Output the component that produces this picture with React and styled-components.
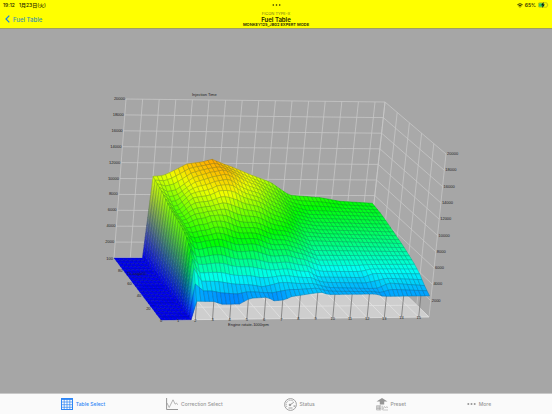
import React from 'react';
import styled, { createGlobalStyle } from 'styled-components';

const GlobalStyle = createGlobalStyle`
  body {
    margin: 0;
    background-color: #a6a6a6;
    font-family: Inter, 'Noto Sans CJK JP', sans-serif;
  }
`;

const Page = styled.div`
  display: flex;
  flex-direction: column;
  min-height: 100vh;
`;

const Header = styled.header`
  background-color: #ffff00;
  border-bottom: 1px solid #a0a060;
  color: #222200;
`;

const StatusBar = styled.div`
  display: grid;
  grid-template-columns: 1fr auto 1fr;
  align-items: center;
  height: 10px;
  padding: 0 3px;
  font-size: 5px;
  font-weight: 500;
  line-height: 10px;
`;

const Clock = styled.div`
  display: flex;
  gap: 4px;
`;

const Battery = styled.div`
  display: flex;
  justify-content: flex-end;
  align-items: center;
  gap: 2px;
`;

const NavBar = styled.div`
  display: grid;
  grid-template-columns: 1fr auto 1fr;
  align-items: center;
  height: 18px;
  padding: 0 5px;
`;

const BackLink = styled.a`
  display: flex;
  align-items: center;
  gap: 3px;
  color: #3b8fb0;
  font-size: 6px;
  font-weight: 500;
  text-decoration: none;
`;

const Titles = styled.div`
  text-align: center;
`;

const Brand = styled.div`
  color: #77771a;
  font-size: 4px;
  line-height: 4px;
`;

const Title = styled.h1`
  margin: 0;
  font-size: 6px;
  font-weight: 600;
  line-height: 7px;
`;

const Mode = styled.div`
  font-size: 4px;
  font-weight: 600;
  line-height: 4px;
`;

const Main = styled.main`
  display: flex;
  flex: 1;
`;

const Chart = styled.svg`
  display: block;
  width: 100%;
  font-family: 'Liberation Sans', sans-serif;
  font-size: 4px;
`;

const TabBar = styled.nav`
  display: flex;
  justify-content: space-evenly;
  height: 20px;
  background-color: #fafafa;
  border-top: 1px solid #c8c8c8;
`;

const Tab = styled.button`
  display: flex;
  align-items: center;
  gap: 3px;
  padding: 0;
  border: 0;
  background: none;
  color: ${props => (props.$active ? '#2f86f6' : '#969696')};
  font-family: inherit;
  font-size: 5px;
  font-weight: 500;
  cursor: pointer;
`;

const MAX_SPEED = 15.6;
const MAX_TIME = 20000;
const ROWS = 22;
const STEP = 0.25;

// injection time along the engine speed axis, from the back row to the front
const PROFILES = [
  [0, [[2, 10300], [2.6, 10400], [3.1, 10900], [4, 11900], [4.9, 12150], [5.5, 12500], [6.1, 12000], [6.8, 11500], [8, 10500], [9.2, 9600], [10, 8500], [10.4, 8000], [12.3, 7700], [13.5, 7250], [15.6, 7000]]],
  [0.15, [[2, 9800], [2.5, 9300], [3, 9600], [4, 11000], [5, 11900], [5.8, 12100], [7, 11000], [8, 10000], [9, 8900], [10, 7600], [11, 7000], [15.6, 6700]]],
  [0.3, [[2, 9400], [2.6, 8400], [3.5, 9900], [5, 11000], [6, 10900], [7, 9900], [8, 9000], [9, 8000], [10, 6900], [11, 6500], [15.6, 6200]]],
  [0.5, [[2, 9000], [2.6, 7800], [3.2, 8600], [4, 9200], [5, 8900], [6, 8400], [7, 7900], [8, 7400], [9, 6800], [10, 5900], [15.6, 5500]]],
  [0.7, [[2, 8200], [2.6, 6900], [3.2, 7300], [4, 7200], [5, 6800], [6, 6600], [7, 6200], [8, 5900], [9, 5500], [10, 4700], [15.6, 4700]]],
  [0.82, [[2, 7200], [2.4, 5500], [4, 5400], [6, 4800], [8, 4600], [9, 4400], [9.6, 3700], [12.2, 3600], [12.8, 4100], [15.6, 4000]]],
  [0.92, [[2, 5400], [2.5, 3900], [4, 3600], [6, 3100], [7, 3600], [9, 3500], [10, 3000], [12.8, 2800], [13.4, 3500], [15.6, 3100]]],
  [1, [[2, 2250], [3.1, 2200], [3.4, 1850], [4.5, 1850], [5.1, 2550], [6.1, 2650], [6.5, 2200], [7.1, 2300], [7.5, 2700], [9.2, 3200], [9.6, 2900], [12.4, 2900], [12.8, 2600], [15.6, 2600]]],
];

const COLORS = [
  [0, [0, 0, 240]],
  [1800, [0, 110, 255]],
  [2800, [0, 165, 255]],
  [4200, [0, 255, 245]],
  [5600, [0, 255, 130]],
  [7200, [0, 255, 0]],
  [9000, [120, 255, 0]],
  [10600, [240, 255, 0]],
  [12500, [255, 165, 0]],
];

const mix = (a, b, k) => a + (b - a) * k;

const segment = (stops, at) => {
  if (at <= stops[0][0]) return [stops[0][1], stops[0][1], 0];
  for (let i = 1; i < stops.length; i += 1) {
    if (at <= stops[i][0]) {
      return [stops[i - 1][1], stops[i][1], (at - stops[i - 1][0]) / (stops[i][0] - stops[i - 1][0])];
    }
  }
  const last = stops[stops.length - 1][1];
  return [last, last, 0];
};

const lookup = (stops, at) => mix(...segment(stops, at));

// small waves in the middle of the map, none at the edges
const ripple = (speed, depth) => {
  if (speed > 9) return 0;
  const fade = 4 * depth * (1 - depth) * Math.min(1, 9 - speed);
  return 170 * fade * Math.sin(speed * 3.1 + depth * 11);
};

const timeAt = (speed, depth) => {
  if (speed < 1.9) return 0;
  const [from, to, k] = segment(PROFILES, depth);
  return mix(lookup(from, speed), lookup(to, speed), k) + ripple(speed, depth);
};

const colorAt = time => {
  const [from, to, k] = segment(COLORS, time);
  return from.map((channel, i) => mix(channel, to[i], k));
};

const rgb = color => `rgb(${color.map(Math.round).join(',')})`;

const project = (speed, depth, time) => {
  const u = speed / MAX_SPEED;
  const h = time / MAX_TIME;
  const x = mix(mix(114, 368, u), mix(161, 429, u), depth);
  const y = mix(258, mix(320, 317, u), depth);
  return [x + h * mix(mix(12, 17, u), mix(10, 17, u), depth), y - h * mix(mix(159, 156, u), 163, depth)];
};

const pointList = list => list.map(([x, y]) => `${x.toFixed(1)},${y.toFixed(1)}`).join(' ');

const between = (a, b, k) => [mix(a[0], b[0], k), mix(a[1], b[1], k)];

const buildCells = () => {
  const cells = [];
  for (let r = 0; r < ROWS; r += 1) {
    const d0 = r / ROWS;
    const d1 = (r + 1) / ROWS;
    for (let s = 0; s < MAX_SPEED - 0.1; s += STEP) {
      const e = Math.min(s + STEP, MAX_SPEED);
      const times = [timeAt(s, d0), timeAt(e, d0), timeAt(e, d1), timeAt(s, d1)];
      const corners = [
        project(s, d0, times[0]),
        project(e, d0, times[1]),
        project(e, d1, times[2]),
        project(s, d1, times[3]),
      ];
      const slices = s === 1.75 ? 20 : 1;
      const left = colorAt((times[0] + times[3]) / 2);
      const right = colorAt((times[1] + times[2]) / 2);
      const fills = Array.from({ length: slices }, (_, i) => ({
        color: rgb(left.map((c, n) => mix(c, right[n], (i + 0.5) / slices))),
        points: pointList([
          between(corners[0], corners[1], i / slices),
          between(corners[0], corners[1], (i + 1) / slices),
          between(corners[3], corners[2], (i + 1) / slices),
          between(corners[3], corners[2], i / slices),
        ]),
      }));
      cells.push({ id: `${r}-${s}`, fills, outline: pointList(corners) });
    }
  }
  return cells;
};

const cells = buildCells();
const speeds = Array.from({ length: 16 }, (_, i) => i);
const times = Array.from({ length: 11 }, (_, i) => i * 2000);
const depths = [0, 0.2, 0.4, 0.6, 0.8, 1];

const GridLine = ({ from, to, stroke = '#c6c6c6' }) => (
  <line x1={from[0]} y1={from[1]} x2={to[0]} y2={to[1]} stroke={stroke} strokeWidth="0.8" />
);

const Grid = () => (
  <g>
    <polygon
      fill="#cecece"
      points={pointList([project(0, 0, 0), project(MAX_SPEED, 0, 0), project(MAX_SPEED, 1, 0), project(0, 1, 0)])}
    />
    <polygon
      fill="#a9a9a9"
      points={pointList([
        project(MAX_SPEED, 0, 0),
        project(MAX_SPEED, 0, MAX_TIME),
        project(MAX_SPEED, 1, MAX_TIME),
        project(MAX_SPEED, 1, 0),
      ])}
    />
    {times.map(t => (
      <g key={t}>
        <GridLine from={project(0, 0, t)} to={project(MAX_SPEED, 0, t)} />
        <GridLine from={project(MAX_SPEED, 0, t)} to={project(MAX_SPEED, 1, t)} />
      </g>
    ))}
    {[...speeds, MAX_SPEED].map(s => (
      <g key={s}>
        <GridLine from={project(s, 0, 0)} to={project(s, 0, MAX_TIME)} />
        <GridLine from={project(s, 0, 0)} to={project(s, 1, 0)} stroke="#e2e2e2" />
      </g>
    ))}
    {depths.map(d => (
      <g key={d}>
        <GridLine from={project(MAX_SPEED, d, 0)} to={project(MAX_SPEED, d, MAX_TIME)} />
        <GridLine from={project(0, d, 0)} to={project(MAX_SPEED, d, 0)} stroke="#e2e2e2" />
      </g>
    ))}
    {speeds.map(s => (
      <GridLine key={s} from={project(s, 1, 0)} to={project(s, 1, timeAt(s, 1))} stroke="#777" />
    ))}
  </g>
);

const Surface = () => (
  <g>
    {cells.map(({ id, fills, outline }) => (
      <g key={id}>
        {fills.map(({ color, points }) => (
          <polygon key={points} points={points} fill={color} stroke={color} strokeWidth="0.4" />
        ))}
        <polygon points={outline} fill="none" stroke="#002030" strokeOpacity="0.5" strokeWidth="0.35" />
      </g>
    ))}
  </g>
);

const Labels = () => (
  <g fill="#222">
    <text x="192" y="96">Injection Time</text>
    <text x="228" y="326">Engine rotate-1000rpm</text>
    <text x="127" y="275">Th angle%</text>
    {times.slice(1).map(t => {
      const [x, y] = project(0, 0, t);
      const [rx, ry] = project(MAX_SPEED, 1, t);
      return (
        <g key={t}>
          <text x={x - 1} y={y + 1} textAnchor="end">{t}</text>
          <text x={rx + 1} y={ry + 1}>{t}</text>
        </g>
      );
    })}
    {speeds.map(s => {
      const [x, y] = project(s, 1, 0);
      return <text key={s} x={x} y={y + 2} textAnchor="middle">{s}</text>;
    })}
    {depths.slice(0, 5).map(d => {
      const [x, y] = project(0, d, 0);
      return <text key={d} x={x - 1} y={y + 2} textAnchor="end">{Math.round(100 - d * 100)}</text>;
    })}
  </g>
);

const TableIcon = () => (
  <svg width="12" height="12" viewBox="0 0 12 12" fill="none" stroke="currentColor">
    <rect x="0.5" y="0.5" width="11" height="11" />
    <path d="M0 1.2h12" strokeWidth="1.4" />
    <path d="M3.2 0v12M6 0v12M8.8 0v12M0 4h12M0 6.7h12M0 9.3h12" strokeWidth="0.7" />
  </svg>
);

const CurveIcon = () => (
  <svg width="12" height="12" viewBox="0 0 12 12" fill="none" stroke="currentColor">
    <path d="M0.6 0v11.5H12" />
    <path d="M1 5l2.2 4.5L7 1.8l2.2 4.4L10.4 5l1.4 1.8" strokeWidth="0.7" />
  </svg>
);

const GaugeIcon = () => (
  <svg width="13" height="13" viewBox="0 0 13 13" fill="none" stroke="currentColor">
    <circle cx="6.5" cy="6.5" r="5.9" strokeWidth="0.9" />
    <path d="M2.8 8.8A4.3 4.3 0 0 1 9.6 3.6" strokeWidth="1" strokeDasharray="1 0.8" />
    <path d="M5.5 7.2L9.8 4.3M4.5 10h4" strokeWidth="0.9" />
    <circle cx="6" cy="6.9" r="0.8" fill="currentColor" />
    <path d="M9.5 7.5h1.8v1.2H9.5z" fill="currentColor" stroke="none" />
  </svg>
);

const PresetIcon = () => (
  <svg width="12" height="13" viewBox="0 0 12 13" fill="none" stroke="currentColor" strokeWidth="0.5">
    <path d="M6 0l5.5 3.6H8.2V6.6H3.8V3.6H.5z" fill="currentColor" stroke="none" />
    <path d="M.5 7.7H5V12H.5zM2 7.7V12M3.5 7.7V12M.5 9.1H5M.5 10.5H5" />
    <path d="M6.7 7.7v4.3H12M7 11l1.5-2.5L9.8 10l1-1.5 1 1.5" />
  </svg>
);

const Dots = ({ size = 1 }) => (
  <svg width="9" height="4" viewBox="0 0 9 4" fill="currentColor">
    <circle cx="1.3" cy="2" r={size} />
    <circle cx="4.5" cy="2" r={size} />
    <circle cx="7.7" cy="2" r={size} />
  </svg>
);

const TABS = [
  { label: 'Table Select', Icon: TableIcon, active: true },
  { label: 'Correction Select', Icon: CurveIcon },
  { label: 'Status', Icon: GaugeIcon },
  { label: 'Preset', Icon: PresetIcon },
  { label: 'More', Icon: Dots },
];

export default function App() {
  return (
    <Page>
      <GlobalStyle />
      <Header>
        <StatusBar>
          <Clock>
            <span>19:12</span>
            <span>1月23日(火)</span>
          </Clock>
          <Dots size={0.8} />
          <Battery>
            <svg width="6" height="5" viewBox="0 0 6 5" fill="none" stroke="currentColor">
              <path d="M.4 1.7Q3 -.3 5.6 1.7M1.4 2.9Q3 1.7 4.6 2.9" strokeWidth="0.9" />
              <path d="M2.1 3.5h1.8L3 4.7z" fill="currentColor" stroke="none" />
            </svg>
            <span>65%</span>
            <svg width="11" height="6" viewBox="0 0 11 6">
              <rect x="0.3" y="0.8" width="9" height="4.4" rx="1.2" fill="none" stroke="#8c8c20" strokeWidth="0.5" />
              <rect x="0.8" y="1.3" width="5.4" height="3.4" rx="0.8" fill="#34c759" />
              <path d="M5.6 0L3 3.3h1.6L4 6l2.8-3.4H5.2z" fill="#111" />
              <path d="M9.8 2.2q1 .8 0 1.6z" fill="#8c8c20" />
            </svg>
          </Battery>
        </StatusBar>
        <NavBar>
          <BackLink href="#back">
            <svg width="5" height="8" viewBox="0 0 5 8" fill="none" stroke="#1680e8" strokeWidth="1.2">
              <path d="M4.3.6L1 4l3.3 3.4" />
            </svg>
            Fuel Table
          </BackLink>
          <Titles>
            <Brand>FICON TYPE-X</Brand>
            <Title>Fuel Table</Title>
            <Mode>MONKEY125_JB02 EXPERT MODE</Mode>
          </Titles>
        </NavBar>
      </Header>
      <Main>
        <Chart viewBox="0 29 552 364" role="img" aria-label="Injection Time">
          <Grid />
          <Surface />
          <Labels />
        </Chart>
      </Main>
      <TabBar>
        {TABS.map(({ label, Icon, active }) => (
          <Tab key={label} type="button" $active={active}>
            <Icon />
            {label}
          </Tab>
        ))}
      </TabBar>
    </Page>
  );
}
